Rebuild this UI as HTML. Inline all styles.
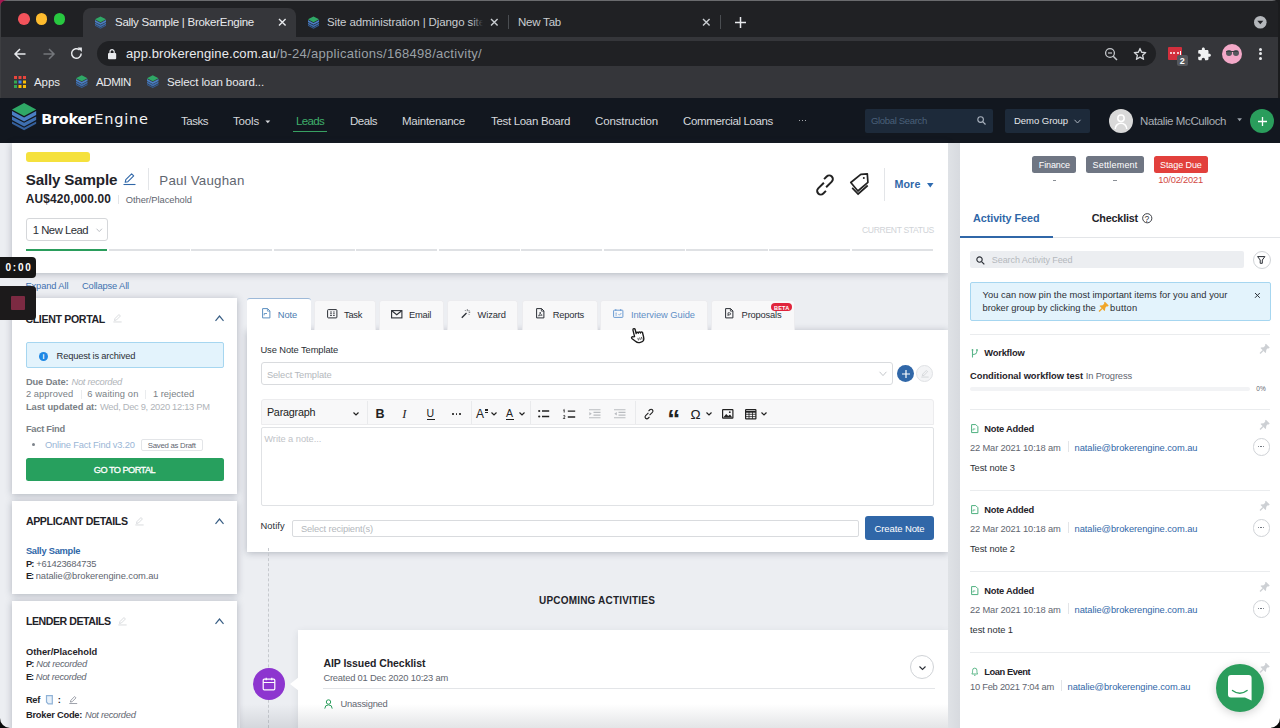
<!DOCTYPE html>
<html lang="en"><head><meta charset="utf-8"><title>Sally Sample | BrokerEngine</title>
<style>
html,body{margin:0;padding:0;}
body{width:1280px;height:728px;overflow:hidden;position:relative;background:#eceef2;font-family:"Liberation Sans",sans-serif;}
.t{position:absolute;white-space:nowrap;line-height:1;}
.r{position:absolute;box-sizing:border-box;}
svg{position:absolute;overflow:visible;}
</style></head><body>
<div class="r" style="left:0.00px;top:0.00px;width:1280.00px;height:37.00px;background:#202124;"></div>
<div class="r" style="left:0.00px;top:37.00px;width:1280.00px;height:61.00px;background:#35363a;"></div>
<div class="r" style="left:83.00px;top:8.00px;width:213.00px;height:29.00px;background:#35363a;border-radius:8px 8px 0 0;"></div>
<div class="r" style="left:18.40px;top:13.40px;width:11.60px;height:11.60px;background:#f3535b;border-radius:50%;"></div>
<div class="r" style="left:35.90px;top:13.40px;width:11.60px;height:11.60px;background:#febc2e;border-radius:50%;"></div>
<div class="r" style="left:53.60px;top:13.40px;width:11.60px;height:11.60px;background:#28c840;border-radius:50%;"></div>
<span class="t" style="left:115.00px;top:17.00px;font-size:11.50px;color:#e8eaed;letter-spacing:-0.266px;">Sally Sample | BrokerEngine</span>
<span class="t" style="left:327.00px;top:17.00px;font-size:11.50px;color:#c9cdd1;letter-spacing:-0.107px;">Site administration | Django site</span>
<div class="r" style="left:471.00px;top:12.00px;width:16.00px;height:20.00px;background:linear-gradient(90deg,rgba(32,33,36,0),#202124 75%);"></div>
<span class="t" style="left:518.00px;top:17.00px;font-size:11.50px;color:#c9cdd1;letter-spacing:-0.219px;">New Tab</span>
<div class="r" style="left:96.50px;top:41.20px;width:1059.00px;height:24.60px;background:#202124;border-radius:13px;"></div>
<span class="t" style="left:126.00px;top:47.00px;font-size:13.00px;color:#e8eaed;letter-spacing:0.112px;">app.brokerengine.com.au</span>
<span class="t" style="left:276.00px;top:47.00px;font-size:13.00px;color:#9aa0a6;letter-spacing:0.290px;">/b-24/applications/168498/activity/</span>
<span class="t" style="left:34.00px;top:77.00px;font-size:11.50px;color:#e8eaed;letter-spacing:-0.053px;">Apps</span>
<span class="t" style="left:96.00px;top:77.00px;font-size:11.50px;color:#e8eaed;letter-spacing:-0.411px;">ADMIN</span>
<span class="t" style="left:167.00px;top:77.00px;font-size:11.50px;color:#e8eaed;letter-spacing:-0.105px;">Select loan board...</span>
<div class="r" style="left:0.00px;top:98.00px;width:1280.00px;height:45.00px;background:#12171f;"></div>
<span class="t" style="left:41.25px;top:112.00px;font-size:14.50px;color:#ffffff;font-weight:700;letter-spacing:-0.301px;font-family:'DejaVu Sans',sans-serif;">Broker</span>
<span class="t" style="left:94.20px;top:112.00px;font-size:14.50px;color:#f2f3f5;letter-spacing:0.801px;font-family:'DejaVu Sans',sans-serif;">Engine</span>
<span class="t" style="left:181.00px;top:116.00px;font-size:11.50px;color:#d5d8dc;letter-spacing:-0.479px;">Tasks</span>
<span class="t" style="left:233.00px;top:116.00px;font-size:11.50px;color:#d5d8dc;letter-spacing:-0.169px;">Tools</span>
<span class="t" style="left:296.00px;top:116.00px;font-size:11.50px;color:#3fae6a;letter-spacing:-0.667px;">Leads</span>
<div class="r" style="left:292.80px;top:130.60px;width:34.40px;height:1.30px;background:#38a062;"></div>
<span class="t" style="left:350.00px;top:116.00px;font-size:11.50px;color:#d5d8dc;letter-spacing:-0.480px;">Deals</span>
<span class="t" style="left:402.00px;top:116.00px;font-size:11.50px;color:#d5d8dc;letter-spacing:-0.259px;">Maintenance</span>
<span class="t" style="left:491.00px;top:116.00px;font-size:11.50px;color:#d5d8dc;letter-spacing:-0.317px;">Test Loan Board</span>
<span class="t" style="left:595.00px;top:116.00px;font-size:11.50px;color:#d5d8dc;letter-spacing:-0.130px;">Construction</span>
<span class="t" style="left:683.00px;top:116.00px;font-size:11.50px;color:#d5d8dc;letter-spacing:-0.367px;">Commercial Loans</span>
<div class="r" style="left:798.50px;top:120.00px;width:1.40px;height:1.40px;background:#d5d8dc;border-radius:50%;"></div>
<div class="r" style="left:801.50px;top:120.00px;width:1.40px;height:1.40px;background:#d5d8dc;border-radius:50%;"></div>
<div class="r" style="left:804.50px;top:120.00px;width:1.40px;height:1.40px;background:#d5d8dc;border-radius:50%;"></div>
<div class="r" style="left:865.00px;top:108.60px;width:128.00px;height:24.00px;background:#1d2a3a;border-radius:2px;"></div>
<span class="t" style="left:871.00px;top:116.00px;font-size:9.50px;color:#4a6079;letter-spacing:-0.323px;">Global Search</span>
<div class="r" style="left:1005.00px;top:108.60px;width:85.00px;height:24.00px;background:#1d2a3a;border-radius:2px;"></div>
<span class="t" style="left:1014.00px;top:116.00px;font-size:9.50px;color:#e4e7ea;letter-spacing:-0.039px;">Demo Group</span>
<div class="r" style="left:1109.00px;top:109.00px;width:24.00px;height:24.00px;background:#d9d9d9;border-radius:50%;"></div>
<span class="t" style="left:1140.00px;top:116.00px;font-size:11.50px;color:#a9aeb5;letter-spacing:-0.393px;">Natalie McCulloch</span>
<div class="r" style="left:1250.00px;top:109.00px;width:24.00px;height:24.00px;background:#2a9d5c;border-radius:50%;"></div>
<div class="r" style="left:0.00px;top:143.00px;width:1280.00px;height:585.00px;background:#eceef2;"></div>
<div class="r" style="left:12.30px;top:143.00px;width:935.70px;height:129.50px;background:#ffffff;box-shadow:0 1px 7px rgba(40,50,70,.30);"></div>
<div class="r" style="left:25.80px;top:152.10px;width:63.80px;height:9.60px;background:#f5e13d;border-radius:3px;"></div>
<span class="t" style="left:25.80px;top:172.00px;font-size:15.20px;color:#1f2329;font-weight:700;letter-spacing:-0.190px;">Sally Sample</span>
<span class="t" style="left:159.30px;top:174.00px;font-size:13.30px;color:#5f6670;letter-spacing:0.226px;">Paul Vaughan</span>
<div class="r" style="left:147.60px;top:168.40px;width:1.00px;height:21.50px;background:#e3e5e8;"></div>
<span class="t" style="left:25.80px;top:194.00px;font-size:11.90px;color:#1f2329;font-weight:700;letter-spacing:0.141px;">AU$420,000.00</span>
<div class="r" style="left:118.30px;top:194.50px;width:1.00px;height:9.00px;background:#e3e5e8;"></div>
<span class="t" style="left:125.80px;top:196.00px;font-size:9.33px;color:#5f6670;letter-spacing:-0.060px;">Other/Placehold</span>
<div class="r" style="left:26.20px;top:218.00px;width:82.30px;height:23.20px;background:#ffffff;border:1px solid #d5d7da;border-radius:3px;"></div>
<span class="t" style="left:32.70px;top:225.00px;font-size:11.30px;color:#2b2f36;letter-spacing:-0.481px;">1 New Lead</span>
<div class="r" style="left:26.00px;top:249.00px;width:81.20px;height:1.70px;background:#2a9d5c;"></div>
<div class="r" style="left:108.55px;top:249.00px;width:81.20px;height:1.70px;background:#dfe1e4;"></div>
<div class="r" style="left:191.10px;top:249.00px;width:81.20px;height:1.70px;background:#dfe1e4;"></div>
<div class="r" style="left:273.65px;top:249.00px;width:81.20px;height:1.70px;background:#dfe1e4;"></div>
<div class="r" style="left:356.20px;top:249.00px;width:81.20px;height:1.70px;background:#dfe1e4;"></div>
<div class="r" style="left:438.75px;top:249.00px;width:81.20px;height:1.70px;background:#dfe1e4;"></div>
<div class="r" style="left:521.30px;top:249.00px;width:81.20px;height:1.70px;background:#dfe1e4;"></div>
<div class="r" style="left:603.85px;top:249.00px;width:81.20px;height:1.70px;background:#dfe1e4;"></div>
<div class="r" style="left:686.40px;top:249.00px;width:81.20px;height:1.70px;background:#dfe1e4;"></div>
<div class="r" style="left:768.95px;top:249.00px;width:81.20px;height:1.70px;background:#dfe1e4;"></div>
<div class="r" style="left:851.50px;top:249.00px;width:81.20px;height:1.70px;background:#dfe1e4;"></div>
<span class="t" style="left:862.00px;top:226.00px;font-size:8.60px;color:#d0d3d7;letter-spacing:-0.352px;">CURRENT STATUS</span>
<span class="t" style="left:894.40px;top:179.00px;font-size:10.70px;color:#3067a8;font-weight:700;letter-spacing:0.134px;">More</span>
<div class="r" style="left:883.50px;top:168.00px;width:1.00px;height:32.50px;background:#e3e5e8;"></div>
<span class="t" style="left:25.40px;top:282.00px;font-size:9.33px;color:#3f72b0;letter-spacing:-0.109px;">Expand All</span>
<span class="t" style="left:82.00px;top:282.00px;font-size:9.33px;color:#3f72b0;letter-spacing:-0.146px;">Collapse All</span>
<div class="r" style="left:12.30px;top:298.40px;width:224.50px;height:195.40px;background:#ffffff;box-shadow:0 1px 7px rgba(40,50,70,.30);"></div>
<span class="t" style="left:25.40px;top:314.00px;font-size:10.60px;color:#1f2329;font-weight:700;letter-spacing:-0.339px;">CLIENT PORTAL</span>
<div class="r" style="left:26.40px;top:342.20px;width:197.20px;height:26.00px;background:#e3f3fc;border:1px solid #a6d6f0;border-radius:2px;"></div>
<div class="r" style="left:39.00px;top:351.50px;width:9.00px;height:9.00px;background:#1e88e5;border-radius:50%;"></div>
<span class="t" style="left:56.60px;top:352.00px;font-size:9.33px;color:#2b2f36;letter-spacing:-0.176px;">Request is archived</span>
<span class="t" style="left:25.90px;top:378.00px;font-size:9.33px;color:#7a7f86;font-weight:700;letter-spacing:-0.105px;">Due Date:</span>
<span class="t" style="left:71.50px;top:378.00px;font-size:9.33px;color:#b0b4b9;font-style:italic;letter-spacing:-0.286px;">Not recorded</span>
<span class="t" style="left:25.90px;top:390.00px;font-size:9.33px;color:#7a7f86;letter-spacing:0.061px;">2 approved</span>
<div class="r" style="left:80.70px;top:390.00px;width:1.00px;height:9.00px;background:#eaecee;"></div>
<span class="t" style="left:87.25px;top:390.00px;font-size:9.33px;color:#7a7f86;letter-spacing:0.117px;">6 waiting on</span>
<div class="r" style="left:145.40px;top:390.00px;width:1.00px;height:9.00px;background:#eaecee;"></div>
<span class="t" style="left:152.90px;top:390.00px;font-size:9.33px;color:#7a7f86;letter-spacing:0.023px;">1 rejected</span>
<span class="t" style="left:25.90px;top:403.00px;font-size:9.33px;color:#7a7f86;font-weight:700;letter-spacing:-0.047px;">Last updated at:</span>
<span class="t" style="left:100.00px;top:403.00px;font-size:9.33px;color:#b0b4b9;letter-spacing:-0.294px;">Wed, Dec 9, 2020 12:13 PM</span>
<span class="t" style="left:25.90px;top:425.00px;font-size:9.33px;color:#7a7f86;font-weight:700;letter-spacing:-0.263px;">Fact Find</span>
<span class="t" style="left:45.00px;top:441.00px;font-size:9.33px;color:#9ab6d6;letter-spacing:-0.189px;">Online Fact Find v3.20</span>
<div class="r" style="left:141.20px;top:439.40px;width:61.40px;height:11.80px;background:#ffffff;border:1px solid #e3e5e8;border-radius:2px;"></div>
<span class="t" style="left:147.80px;top:442.00px;font-size:7.80px;color:#5f6670;letter-spacing:-0.271px;">Saved as Draft</span>
<div class="r" style="left:32.30px;top:443.40px;width:3.00px;height:3.00px;background:#7d838b;border-radius:50%;"></div>
<div class="r" style="left:25.90px;top:457.60px;width:198.20px;height:23.40px;background:#27a05e;border-radius:2.5px;"></div>
<span class="t" style="left:93.80px;top:466.00px;font-size:9.20px;color:#ffffff;letter-spacing:-0.527px;-webkit-text-stroke:0.3px #ffffff;">GO TO PORTAL</span>
<div class="r" style="left:12.30px;top:501.20px;width:224.50px;height:92.60px;background:#ffffff;box-shadow:0 1px 7px rgba(40,50,70,.30);"></div>
<span class="t" style="left:25.90px;top:516.00px;font-size:10.60px;color:#1f2329;font-weight:700;letter-spacing:-0.374px;">APPLICANT DETAILS</span>
<span class="t" style="left:25.90px;top:547.00px;font-size:9.33px;color:#3067a8;font-weight:700;letter-spacing:-0.264px;">Sally Sample</span>
<span class="t" style="left:25.90px;top:560.00px;font-size:9.33px;color:#1f2329;font-weight:700;letter-spacing:-0.915px;">P:</span>
<span class="t" style="left:36.25px;top:560.00px;font-size:9.33px;color:#5f6670;letter-spacing:-0.211px;">+61423684735</span>
<span class="t" style="left:25.90px;top:572.00px;font-size:9.33px;color:#1f2329;font-weight:700;letter-spacing:-1.165px;">E:</span>
<span class="t" style="left:35.70px;top:572.00px;font-size:9.33px;color:#5f6670;letter-spacing:-0.067px;">natalie@brokerengine.com.au</span>
<div class="r" style="left:12.30px;top:601.20px;width:224.50px;height:130.00px;background:#ffffff;box-shadow:0 1px 7px rgba(40,50,70,.30);"></div>
<span class="t" style="left:25.90px;top:616.00px;font-size:10.60px;color:#1f2329;font-weight:700;letter-spacing:-0.449px;">LENDER DETAILS</span>
<span class="t" style="left:25.90px;top:648.00px;font-size:9.33px;color:#1f2329;font-weight:700;letter-spacing:-0.017px;">Other/Placehold</span>
<span class="t" style="left:25.90px;top:660.00px;font-size:9.33px;color:#1f2329;font-weight:700;letter-spacing:-0.915px;">P:</span>
<span class="t" style="left:36.25px;top:660.00px;font-size:9.33px;color:#5f6670;font-style:italic;letter-spacing:-0.278px;">Not recorded</span>
<span class="t" style="left:25.90px;top:673.00px;font-size:9.33px;color:#1f2329;font-weight:700;letter-spacing:-1.165px;">E:</span>
<span class="t" style="left:35.70px;top:673.00px;font-size:9.33px;color:#5f6670;font-style:italic;letter-spacing:-0.278px;">Not recorded</span>
<span class="t" style="left:25.90px;top:696.00px;font-size:9.33px;color:#1f2329;font-weight:700;letter-spacing:-0.311px;">Ref</span>
<span class="t" style="left:57.80px;top:696.00px;font-size:9.33px;color:#1f2329;font-weight:700;">:</span>
<span class="t" style="left:25.90px;top:711.00px;font-size:9.33px;color:#1f2329;font-weight:700;letter-spacing:-0.233px;">Broker Code:</span>
<span class="t" style="left:85.00px;top:711.00px;font-size:9.33px;color:#5f6670;font-style:italic;letter-spacing:-0.278px;">Not recorded</span>
<div class="r" style="left:247.00px;top:329.60px;width:701.00px;height:222.60px;background:#ffffff;box-shadow:0 1px 7px rgba(40,50,70,.30);"></div>
<div class="r" style="left:247.20px;top:298.40px;width:63.40px;height:32.50px;background:#ffffff;border-top:1.5px solid #9db9d8;border-radius:3px 3px 0 0;"></div>
<span class="t" style="left:277.80px;top:311.00px;font-size:9.33px;color:#4a7bb0;letter-spacing:-0.127px;">Note</span>
<div class="r" style="left:313.90px;top:299.80px;width:61.70px;height:29.80px;background:#f8f8f9;border:1px solid #ececef;border-bottom:none;border-radius:3px 3px 0 0;"></div>
<span class="t" style="left:344.10px;top:311.00px;font-size:9.33px;color:#2b2f36;letter-spacing:-0.321px;">Task</span>
<div class="r" style="left:378.90px;top:299.80px;width:64.70px;height:29.80px;background:#f8f8f9;border:1px solid #ececef;border-bottom:none;border-radius:3px 3px 0 0;"></div>
<span class="t" style="left:409.00px;top:311.00px;font-size:9.33px;color:#2b2f36;letter-spacing:-0.266px;">Email</span>
<div class="r" style="left:446.70px;top:299.80px;width:71.80px;height:29.80px;background:#f8f8f9;border:1px solid #ececef;border-bottom:none;border-radius:3px 3px 0 0;"></div>
<span class="t" style="left:477.50px;top:311.00px;font-size:9.33px;color:#2b2f36;letter-spacing:-0.122px;">Wizard</span>
<div class="r" style="left:521.75px;top:299.80px;width:76.00px;height:29.80px;background:#f8f8f9;border:1px solid #ececef;border-bottom:none;border-radius:3px 3px 0 0;"></div>
<span class="t" style="left:552.80px;top:311.00px;font-size:9.33px;color:#2b2f36;letter-spacing:-0.196px;">Reports</span>
<div class="r" style="left:599.90px;top:299.80px;width:107.80px;height:29.80px;background:#f8f8f9;border:1px solid #ececef;border-bottom:none;border-radius:3px 3px 0 0;"></div>
<span class="t" style="left:630.90px;top:311.00px;font-size:9.33px;color:#5f8fc6;letter-spacing:-0.048px;">Interview Guide</span>
<div class="r" style="left:711.00px;top:299.80px;width:83.60px;height:29.80px;background:#f8f8f9;border:1px solid #ececef;border-bottom:none;border-radius:3px 3px 0 0;"></div>
<span class="t" style="left:741.60px;top:311.00px;font-size:9.33px;color:#2b2f36;letter-spacing:-0.188px;">Proposals</span>
<div class="r" style="left:771.10px;top:303.30px;width:21.30px;height:8.10px;background:#e0243c;border-radius:4px;"></div>
<span class="t" style="left:774.00px;top:306.00px;font-size:5.60px;color:#ffffff;font-weight:700;letter-spacing:0.168px;">BETA</span>
<span class="t" style="left:260.40px;top:346.00px;font-size:9.33px;color:#2b2f36;letter-spacing:-0.081px;">Use Note Template</span>
<div class="r" style="left:260.60px;top:362.20px;width:632.00px;height:23.00px;background:#ffffff;border:1px solid #d9dbde;border-radius:3px;"></div>
<span class="t" style="left:266.90px;top:371.00px;font-size:9.33px;color:#b4b8bd;letter-spacing:-0.101px;">Select Template</span>
<div class="r" style="left:897.00px;top:365.00px;width:17.00px;height:17.00px;background:#3067a8;border-radius:50%;"></div>
<div class="r" style="left:916.00px;top:365.00px;width:17.00px;height:17.00px;background:#f3f4f6;border:1px solid #e0e2e5;border-radius:50%;"></div>
<div class="r" style="left:260.90px;top:399.30px;width:673.00px;height:25.80px;background:#f8f8f9;border:1px solid #ececee;border-radius:3px 3px 0 0;"></div>
<div class="r" style="left:260.90px;top:426.90px;width:673.00px;height:78.90px;background:#ffffff;border:1px solid #e0e2e5;border-radius:2px;"></div>
<span class="t" style="left:266.90px;top:407.00px;font-size:10.80px;color:#222222;letter-spacing:-0.226px;">Paragraph</span>
<span class="t" style="left:264.30px;top:435.00px;font-size:9.33px;color:#bfc3c8;letter-spacing:-0.060px;">Write a note...</span>
<span class="t" style="left:260.40px;top:522.00px;font-size:9.33px;color:#2b2f36;letter-spacing:0.075px;">Notify</span>
<div class="r" style="left:292.20px;top:520.30px;width:567.00px;height:16.40px;background:#ffffff;border:1px solid #d9dbde;border-radius:2px;"></div>
<span class="t" style="left:300.90px;top:525.00px;font-size:9.33px;color:#b4b8bd;letter-spacing:-0.141px;">Select recipient(s)</span>
<div class="r" style="left:865.00px;top:516.40px;width:68.60px;height:23.80px;background:#3067a8;border-radius:3px;"></div>
<span class="t" style="left:874.50px;top:524.00px;font-size:9.50px;color:#ffffff;letter-spacing:-0.111px;">Create Note</span>
<div class="r" style="left:268px;top:548px;width:0;height:180px;border-left:1px dashed #c6c9ce;"></div>
<span class="t" style="left:539.00px;top:596.00px;font-size:10.00px;color:#1f2329;font-weight:700;letter-spacing:0.189px;">UPCOMING ACTIVITIES</span>
<div class="r" style="left:298.00px;top:630.25px;width:650.00px;height:100.00px;background:#ffffff;box-shadow:0 2px 7px rgba(60,70,90,.12);"></div>
<span class="t" style="left:323.40px;top:658.00px;font-size:10.50px;color:#1f2329;font-weight:700;letter-spacing:-0.055px;">AIP Issued Checklist</span>
<span class="t" style="left:323.40px;top:674.00px;font-size:9.33px;color:#5f6670;letter-spacing:-0.200px;">Created 01 Dec 2020 10:23 am</span>
<div class="r" style="left:323.00px;top:688.20px;width:612.00px;height:1.00px;background:#e3e5e8;"></div>
<span class="t" style="left:340.60px;top:700.00px;font-size:9.33px;color:#5f6670;letter-spacing:-0.238px;">Unassigned</span>
<div class="r" style="left:252.90px;top:667.80px;width:32.40px;height:32.40px;background:#8d35cf;border-radius:50%;"></div>
<div class="r" style="left:910.00px;top:655.00px;width:24.00px;height:24.00px;background:#ffffff;border:1px solid #d0d3d7;border-radius:50%;"></div>
<div class="r" style="left:240.00px;top:704.00px;width:716.00px;height:24.00px;background:linear-gradient(rgba(130,135,145,0),rgba(130,135,145,.22));"></div>
<div class="r" style="left:948.00px;top:143.00px;width:12.00px;height:585.00px;background:linear-gradient(90deg,#dfe2e6,#d7dadf);"></div>
<div class="r" style="left:960.00px;top:143.00px;width:320.00px;height:585.00px;background:#ffffff;"></div>
<div class="r" style="left:1032.00px;top:155.75px;width:44.25px;height:17.25px;background:#6f7683;border-radius:2.5px;"></div>
<span class="t" style="left:1038.75px;top:161.00px;font-size:9.00px;color:#ffffff;letter-spacing:-0.110px;">Finance</span>
<div class="r" style="left:1086.25px;top:155.75px;width:58.00px;height:17.25px;background:#6f7683;border-radius:2.5px;"></div>
<span class="t" style="left:1092.50px;top:161.00px;font-size:9.00px;color:#ffffff;letter-spacing:0.198px;">Settlement</span>
<div class="r" style="left:1153.75px;top:155.75px;width:54.25px;height:17.25px;background:#e2403c;border-radius:2.5px;"></div>
<span class="t" style="left:1160.00px;top:161.00px;font-size:9.00px;color:#ffffff;letter-spacing:-0.087px;">Stage Due</span>
<div class="r" style="left:1052.50px;top:180.30px;width:3.50px;height:1.00px;background:#8a8f96;"></div>
<div class="r" style="left:1113.00px;top:180.30px;width:3.50px;height:1.00px;background:#8a8f96;"></div>
<span class="t" style="left:1158.25px;top:176.00px;font-size:9.33px;color:#d24a45;letter-spacing:-0.195px;">10/02/2021</span>
<span class="t" style="left:973.00px;top:213.00px;font-size:10.80px;color:#3067a8;font-weight:700;letter-spacing:-0.056px;">Activity Feed</span>
<span class="t" style="left:1091.75px;top:213.00px;font-size:10.80px;color:#1f2329;font-weight:700;letter-spacing:-0.197px;">Checklist</span>
<div class="r" style="left:960.00px;top:237.00px;width:320.00px;height:1.00px;background:#e3e5e8;"></div>
<div class="r" style="left:960.00px;top:236.25px;width:92.50px;height:2.00px;background:#3067a8;"></div>
<div class="r" style="left:970.00px;top:250.75px;width:273.75px;height:17.25px;background:#eceef1;border-radius:2px;"></div>
<span class="t" style="left:991.75px;top:256.00px;font-size:9.00px;color:#b4b8bd;letter-spacing:-0.064px;">Search Activity Feed</span>
<div class="r" style="left:1252.50px;top:250.50px;width:18.00px;height:18.00px;background:#ffffff;border:1px solid #d0d3d7;border-radius:50%;"></div>
<div class="r" style="left:970.00px;top:281.75px;width:300.50px;height:38.75px;background:#e3f3fc;border:1px solid #a6d6f0;border-radius:2px;"></div>
<span class="t" style="left:982.50px;top:291.00px;font-size:9.33px;color:#2b2f36;letter-spacing:0.037px;">You can now pin the most important items for you and your</span>
<span class="t" style="left:982.50px;top:304.00px;font-size:9.33px;color:#2b2f36;letter-spacing:-0.030px;">broker group by clicking the</span>
<span class="t" style="left:1110.00px;top:304.00px;font-size:9.33px;color:#2b2f36;letter-spacing:0.260px;">button</span>
<div class="r" style="left:970.00px;top:333.50px;width:300.00px;height:1.00px;background:#eaecee;"></div>
<span class="t" style="left:984.25px;top:349.00px;font-size:9.33px;color:#1f2329;font-weight:700;letter-spacing:-0.195px;">Workflow</span>
<span class="t" style="left:970.00px;top:372.00px;font-size:9.33px;color:#1f2329;font-weight:700;letter-spacing:-0.021px;">Conditional workflow test</span>
<span class="t" style="left:1085.75px;top:372.00px;font-size:9.33px;color:#5f6670;letter-spacing:-0.133px;">In Progress</span>
<div class="r" style="left:970.00px;top:387.00px;width:280.00px;height:3.50px;background:#f2f3f5;border-radius:2px;"></div>
<span class="t" style="left:1256.25px;top:386.00px;font-size:6.50px;color:#5f6670;letter-spacing:0.053px;">0%</span>
<div class="r" style="left:970.00px;top:409.20px;width:300.00px;height:1.00px;background:#eaecee;"></div>
<span class="t" style="left:984.25px;top:425.00px;font-size:9.33px;color:#1f2329;font-weight:700;letter-spacing:-0.225px;">Note Added</span>
<span class="t" style="left:970.00px;top:444.00px;font-size:9.33px;color:#5f6670;letter-spacing:-0.157px;">22 Mar 2021 10:18 am</span>
<div class="r" style="left:1067.50px;top:441.00px;width:1.00px;height:11.00px;background:#e3e5e8;"></div>
<span class="t" style="left:1074.50px;top:444.00px;font-size:9.33px;color:#3067a8;letter-spacing:-0.060px;">natalie@brokerengine.com.au</span>
<span class="t" style="left:970.00px;top:464.00px;font-size:9.33px;color:#2b2f36;letter-spacing:-0.058px;">Test note 3</span>
<div class="r" style="left:1252.50px;top:438.00px;width:17.50px;height:17.50px;background:#ffffff;border:1px solid #d0d3d7;border-radius:50%;"></div>
<div class="r" style="left:1257.70px;top:446.20px;width:1.30px;height:1.30px;background:#5f6670;border-radius:50%;"></div>
<div class="r" style="left:1260.40px;top:446.20px;width:1.30px;height:1.30px;background:#5f6670;border-radius:50%;"></div>
<div class="r" style="left:1263.10px;top:446.20px;width:1.30px;height:1.30px;background:#5f6670;border-radius:50%;"></div>
<div class="r" style="left:970.00px;top:490.30px;width:300.00px;height:1.00px;background:#eaecee;"></div>
<span class="t" style="left:984.25px;top:506.00px;font-size:9.33px;color:#1f2329;font-weight:700;letter-spacing:-0.225px;">Note Added</span>
<span class="t" style="left:970.00px;top:525.00px;font-size:9.33px;color:#5f6670;letter-spacing:-0.157px;">22 Mar 2021 10:18 am</span>
<div class="r" style="left:1067.50px;top:522.00px;width:1.00px;height:11.00px;background:#e3e5e8;"></div>
<span class="t" style="left:1074.50px;top:525.00px;font-size:9.33px;color:#3067a8;letter-spacing:-0.060px;">natalie@brokerengine.com.au</span>
<span class="t" style="left:970.00px;top:545.00px;font-size:9.33px;color:#2b2f36;letter-spacing:-0.058px;">Test note 2</span>
<div class="r" style="left:1252.50px;top:519.00px;width:17.50px;height:17.50px;background:#ffffff;border:1px solid #d0d3d7;border-radius:50%;"></div>
<div class="r" style="left:1257.70px;top:527.20px;width:1.30px;height:1.30px;background:#5f6670;border-radius:50%;"></div>
<div class="r" style="left:1260.40px;top:527.20px;width:1.30px;height:1.30px;background:#5f6670;border-radius:50%;"></div>
<div class="r" style="left:1263.10px;top:527.20px;width:1.30px;height:1.30px;background:#5f6670;border-radius:50%;"></div>
<div class="r" style="left:970.00px;top:571.30px;width:300.00px;height:1.00px;background:#eaecee;"></div>
<span class="t" style="left:984.25px;top:587.00px;font-size:9.33px;color:#1f2329;font-weight:700;letter-spacing:-0.225px;">Note Added</span>
<span class="t" style="left:970.00px;top:606.00px;font-size:9.33px;color:#5f6670;letter-spacing:-0.157px;">22 Mar 2021 10:18 am</span>
<div class="r" style="left:1067.50px;top:603.00px;width:1.00px;height:11.00px;background:#e3e5e8;"></div>
<span class="t" style="left:1074.50px;top:606.00px;font-size:9.33px;color:#3067a8;letter-spacing:-0.060px;">natalie@brokerengine.com.au</span>
<span class="t" style="left:970.00px;top:626.00px;font-size:9.33px;color:#2b2f36;letter-spacing:-0.052px;">test note 1</span>
<div class="r" style="left:1252.50px;top:600.00px;width:17.50px;height:17.50px;background:#ffffff;border:1px solid #d0d3d7;border-radius:50%;"></div>
<div class="r" style="left:1257.70px;top:608.20px;width:1.30px;height:1.30px;background:#5f6670;border-radius:50%;"></div>
<div class="r" style="left:1260.40px;top:608.20px;width:1.30px;height:1.30px;background:#5f6670;border-radius:50%;"></div>
<div class="r" style="left:1263.10px;top:608.20px;width:1.30px;height:1.30px;background:#5f6670;border-radius:50%;"></div>
<div class="r" style="left:970.00px;top:652.30px;width:300.00px;height:1.00px;background:#eaecee;"></div>
<span class="t" style="left:984.25px;top:668.00px;font-size:9.33px;color:#1f2329;font-weight:700;letter-spacing:-0.429px;">Loan Event</span>
<span class="t" style="left:970.00px;top:683.00px;font-size:9.33px;color:#5f6670;letter-spacing:-0.247px;">10 Feb 2021 7:04 am</span>
<div class="r" style="left:1061.00px;top:680.00px;width:1.00px;height:11.00px;background:#e3e5e8;"></div>
<span class="t" style="left:1067.50px;top:683.00px;font-size:9.33px;color:#3067a8;letter-spacing:-0.060px;">natalie@brokerengine.com.au</span>
<div class="r" style="left:1216.00px;top:663.50px;width:48.00px;height:48.00px;background:#2a9d5c;border-radius:50%;box-shadow:0 2px 10px rgba(0,0,0,.18);"></div>
<div class="r" style="left:0.00px;top:256.80px;width:35.50px;height:21.20px;background:#161616;border-radius:0 4px 4px 0;"></div>
<span class="t" style="left:5.50px;top:263.00px;font-size:10.00px;color:#ffffff;font-weight:700;letter-spacing:1.746px;">0:00</span>
<div class="r" style="left:0.00px;top:285.70px;width:35.50px;height:34.50px;background:#1c1a1b;border-radius:0 4px 4px 0;"></div>
<div class="r" style="left:10.70px;top:295.90px;width:14.30px;height:14.30px;background:#7c2a42;border-radius:1px;"></div>
<svg style="left:12.10px;top:103.20px;" width="24.20" height="27.20" viewBox="0 0 24 27"><path d="M12 0 L24 6.4 L12 12.8 L0 6.4 Z" fill="#2fa866"/><path d="M0 8 L12 14.4 L24 8 L24 12 L12 18.4 L0 12 Z" fill="#4a7fc4"/><path d="M0 13.3 L12 19.7 L24 13.3 L24 17 L12 23.4 L0 17 Z" fill="#3e6fb0"/><path d="M0 18.3 L12 24.7 L24 18.3 L24 20.6 L12 27 L0 20.6 Z" fill="#35609c"/></svg>
<svg style="left:95.30px;top:16.00px;" width="11.00" height="13.20" viewBox="0 0 24 27"><path d="M12 0 L24 6.4 L12 12.8 L0 6.4 Z" fill="#2fa866"/><path d="M0 8 L12 14.4 L24 8 L24 12 L12 18.4 L0 12 Z" fill="#4a7fc4"/><path d="M0 13.3 L12 19.7 L24 13.3 L24 17 L12 23.4 L0 17 Z" fill="#3e6fb0"/><path d="M0 18.3 L12 24.7 L24 18.3 L24 20.6 L12 27 L0 20.6 Z" fill="#35609c"/></svg>
<svg style="left:307.50px;top:16.00px;" width="11.00" height="13.20" viewBox="0 0 24 27"><path d="M12 0 L24 6.4 L12 12.8 L0 6.4 Z" fill="#2fa866"/><path d="M0 8 L12 14.4 L24 8 L24 12 L12 18.4 L0 12 Z" fill="#4a7fc4"/><path d="M0 13.3 L12 19.7 L24 13.3 L24 17 L12 23.4 L0 17 Z" fill="#3e6fb0"/><path d="M0 18.3 L12 24.7 L24 18.3 L24 20.6 L12 27 L0 20.6 Z" fill="#35609c"/></svg>
<svg style="left:76.00px;top:75.00px;" width="11.50" height="13.30" viewBox="0 0 24 27"><path d="M12 0 L24 6.4 L12 12.8 L0 6.4 Z" fill="#2fa866"/><path d="M0 8 L12 14.4 L24 8 L24 12 L12 18.4 L0 12 Z" fill="#4a7fc4"/><path d="M0 13.3 L12 19.7 L24 13.3 L24 17 L12 23.4 L0 17 Z" fill="#3e6fb0"/><path d="M0 18.3 L12 24.7 L24 18.3 L24 20.6 L12 27 L0 20.6 Z" fill="#35609c"/></svg>
<svg style="left:146.90px;top:75.00px;" width="11.50" height="13.30" viewBox="0 0 24 27"><path d="M12 0 L24 6.4 L12 12.8 L0 6.4 Z" fill="#2fa866"/><path d="M0 8 L12 14.4 L24 8 L24 12 L12 18.4 L0 12 Z" fill="#4a7fc4"/><path d="M0 13.3 L12 19.7 L24 13.3 L24 17 L12 23.4 L0 17 Z" fill="#3e6fb0"/><path d="M0 18.3 L12 24.7 L24 18.3 L24 20.6 L12 27 L0 20.6 Z" fill="#35609c"/></svg>
<svg style="left:13.80px;top:75.60px;" width="12.00" height="12.00" viewBox="0 0 12 12"><rect x="0.0" y="0.0" width="3" height="3" fill="#e8453c"/><rect x="4.5" y="0.0" width="3" height="3" fill="#e8453c"/><rect x="9.0" y="0.0" width="3" height="3" fill="#e8453c"/><rect x="0.0" y="4.5" width="3" height="3" fill="#34a853"/><rect x="4.5" y="4.5" width="3" height="3" fill="#4285f4"/><rect x="9.0" y="4.5" width="3" height="3" fill="#fbbc05"/><rect x="0.0" y="9.0" width="3" height="3" fill="#34a853"/><rect x="4.5" y="9.0" width="3" height="3" fill="#fbbc05"/><rect x="9.0" y="9.0" width="3" height="3" fill="#fbbc05"/></svg>
<svg style="left:278.70px;top:19.20px;" width="6.60" height="6.60" viewBox="0 0 6.6 6.6"><path d="M0 0 L6.6 6.6 M6.6 0 L0 6.6" stroke="#e8eaed" stroke-width="1.4" fill="none"/></svg>
<svg style="left:490.70px;top:19.20px;" width="6.60" height="6.60" viewBox="0 0 6.6 6.6"><path d="M0 0 L6.6 6.6 M6.6 0 L0 6.6" stroke="#c9cdd1" stroke-width="1.4" fill="none"/></svg>
<svg style="left:703.20px;top:19.20px;" width="6.60" height="6.60" viewBox="0 0 6.6 6.6"><path d="M0 0 L6.6 6.6 M6.6 0 L0 6.6" stroke="#c9cdd1" stroke-width="1.4" fill="none"/></svg>
<div class="r" style="left:508.00px;top:15.00px;width:1.00px;height:14.00px;background:#4a4d51;"></div>
<div class="r" style="left:720.00px;top:15.00px;width:1.00px;height:14.00px;background:#4a4d51;"></div>
<svg style="left:735.00px;top:17.00px;" width="11.00" height="11.00" viewBox="0 0 11 11"><path d="M5.5 0 V11 M0 5.5 H11" stroke="#e8eaed" stroke-width="1.5" fill="none"/></svg>
<svg style="left:1254.00px;top:16.30px;" width="12.60" height="12.60" viewBox="0 0 12.6 12.6"><circle cx="6.3" cy="6.3" r="6.3" fill="#b4b7bb"/><path d="M3.3 4.8 H9.3 L6.3 8.3 Z" fill="#202124"/></svg>
<svg style="left:14.00px;top:47.50px;" width="12.00" height="12.00" viewBox="0 0 12 12"><path d="M11.5 6 H1.5 M6 1 L1 6 L6 11" stroke="#e8eaed" stroke-width="1.5" fill="none"/></svg>
<svg style="left:42.50px;top:47.50px;" width="12.00" height="12.00" viewBox="0 0 12 12"><path d="M0.5 6 H10.5 M6 1 L11 6 L6 11" stroke="#74777b" stroke-width="1.5" fill="none"/></svg>
<svg style="left:70.00px;top:47.00px;" width="13.00" height="13.00" viewBox="0 0 13 13"><path d="M11.2 6.5 A4.8 4.8 0 1 1 9.6 2.9" stroke="#e8eaed" stroke-width="1.5" fill="none"/><path d="M7.6 0.6 H11.9 V4.9 Z" fill="#e8eaed"/></svg>
<svg style="left:108.30px;top:48.60px;" width="8.20" height="10.20" viewBox="0 0 8.2 10.2"><rect x="0" y="4" width="8.2" height="6.2" rx="1" fill="#e8eaed"/><path d="M2 4.5 V2.8 a2.1 2.1 0 0 1 4.2 0 V4.5" stroke="#e8eaed" stroke-width="1.2" fill="none"/></svg>
<svg style="left:1103.50px;top:46.50px;" width="14.00" height="14.00" viewBox="0 0 14 14"><circle cx="6" cy="6" r="4.4" stroke="#c4c7cb" stroke-width="1.3" fill="none"/><path d="M9.2 9.2 L13 13" stroke="#c4c7cb" stroke-width="1.5"/><path d="M4 6 H8" stroke="#c4c7cb" stroke-width="1.2"/></svg>
<svg style="left:1132.50px;top:46.60px;" width="14.00" height="14.00" viewBox="0 0 24 24"><path d="M12 2.5 L14.8 9 L21.8 9.6 L16.5 14.2 L18.1 21.1 L12 17.4 L5.9 21.1 L7.5 14.2 L2.2 9.6 L9.2 9 Z" stroke="#d5d8dc" stroke-width="2.2" fill="none" stroke-linejoin="round"/></svg>
<div class="r" style="left:1168.00px;top:46.60px;width:14.30px;height:13.60px;background:#d32f3d;border-radius:1px;"></div>
<div class="r" style="left:1170.20px;top:52.30px;width:2.00px;height:2.00px;background:#ffffff;border-radius:50%;"></div>
<div class="r" style="left:1173.40px;top:52.30px;width:2.00px;height:2.00px;background:#ffffff;border-radius:50%;"></div>
<div class="r" style="left:1176.60px;top:52.30px;width:2.00px;height:2.00px;background:#ffffff;border-radius:50%;"></div>
<div class="r" style="left:1179.70px;top:50.50px;width:1.00px;height:4.00px;background:#ffffff;"></div>
<div class="r" style="left:1177.00px;top:55.00px;width:10.60px;height:10.60px;background:#55585d;border-radius:2px;"></div>
<span class="t" style="left:1179.70px;top:57.00px;font-size:9.00px;color:#ffffff;font-weight:700;">2</span>
<svg style="left:1196.50px;top:46.80px;" width="14.50" height="14.50" viewBox="0 0 24 24"><path d="M20.5 11H19V7c0-1.1-.9-2-2-2h-4V3.5C13 2.12 11.88 1 10.500 1S8 2.12 8 3.5V5H4c-1.1 0-1.99.9-1.99 2v3.800H3.500c1.490 0 2.700 1.210 2.700 2.700s-1.210 2.700-2.700 2.700H2V20c0 1.100.900 2 2 2h3.800v-1.500c0-1.490 1.210-2.700 2.700-2.700 1.490 0 2.700 1.210 2.700 2.700V22H17c1.100 0 2-.900 2-2v-4h1.500c1.380 0 2.500-1.120 2.500-2.500S21.880 11 20.500 11z" fill="#f1f3f4"/></svg>
<div class="r" style="left:1222.00px;top:43.60px;width:20.00px;height:20.00px;background:#f3a9c8;border-radius:50%;"></div>
<div class="r" style="left:1225.50px;top:50.00px;width:6.00px;height:6.00px;background:#55585d;border-radius:50%;"></div>
<div class="r" style="left:1232.50px;top:50.00px;width:6.00px;height:6.00px;background:#55585d;border-radius:50%;"></div>
<div class="r" style="left:1226.00px;top:50.50px;width:12.00px;height:1.20px;background:#3c3f43;"></div>
<div class="r" style="left:1259.00px;top:47.70px;width:3.00px;height:3.00px;background:#e8eaed;border-radius:50%;"></div>
<div class="r" style="left:1259.00px;top:52.10px;width:3.00px;height:3.00px;background:#e8eaed;border-radius:50%;"></div>
<div class="r" style="left:1259.00px;top:56.50px;width:3.00px;height:3.00px;background:#e8eaed;border-radius:50%;"></div>
<svg style="left:265.00px;top:119.50px;" width="5.60" height="3.60" viewBox="0 0 8 5"><path d="M0.5 0.5 H7.5 L4 4.5 Z" fill="#d5d8dc"/></svg>
<svg style="left:977.00px;top:116.00px;" width="9.00" height="9.00" viewBox="0 0 9 9"><circle cx="3.6" cy="3.6" r="2.8" stroke="#aab3bf" stroke-width="1.1" fill="none"/><path d="M5.7 5.7 L8.5 8.5" stroke="#aab3bf" stroke-width="1.2"/></svg>
<svg style="left:1073.50px;top:119.00px;" width="7.00" height="5.00" viewBox="0 0 7 5"><path d="M0.5 0.8 L3.5 4 L6.5 0.8" stroke="#aab3bf" stroke-width="1" fill="none"/></svg>
<svg style="left:1113.00px;top:112.00px;" width="16.00" height="18.00" viewBox="0 0 16 18"><circle cx="8" cy="6.3" r="3.2" stroke="#ffffff" stroke-width="1.5" fill="none"/><path d="M2.2 17 a5.8 5.8 0 0 1 11.6 0" stroke="#ffffff" stroke-width="1.5" fill="none"/></svg>
<svg style="left:1237.20px;top:118.00px;" width="5.20" height="3.40" viewBox="0 0 7 4.5"><path d="M0.3 0.3 H6.7 L3.500 4.2 Z" fill="#9aa1a9"/></svg>
<svg style="left:1257.50px;top:116.50px;" width="9.00" height="9.00" viewBox="0 0 9 9"><path d="M4.5 0 V9 M0 4.5 H9" stroke="#ffffff" stroke-width="1.3" fill="none"/></svg>
<svg style="left:122.80px;top:172.60px;" width="13.00" height="13.00" viewBox="0 0 13 13"><path d="M2.2 9.3 L2.8 6.600 L8.6 0.800 L10.7 2.900 L4.900 8.700 Z" stroke="#3067a8" stroke-width="1.1" fill="none" stroke-linejoin="round"/><path d="M0.500 11.5 H12.5" stroke="#3067a8" stroke-width="1.1"/></svg>
<svg style="left:812.60px;top:172.50px;" width="24.00" height="24.00" viewBox="0 0 24 24"><g transform="rotate(-45 12 12)" fill="none" stroke="#222222" stroke-width="2"><path d="M12.800 9.600 H4.800 a3.600 3.600 0 0 0 0 7.200 H8.500"/><path d="M11.200 14.400 H19.200 a3.600 3.600 0 0 0 0 -7.200 H15.500"/></g></svg>
<svg style="left:849.00px;top:172.00px;" width="21.00" height="24.00" viewBox="0 0 21 24"><path d="M1.8 10.500 L11.8 2.300 L18.3 1.900 L18.900 10.300 L8.900 19 Z" stroke="#222222" stroke-width="1.7" fill="none" stroke-linejoin="round"/><circle cx="14.800" cy="6" r="1" fill="#222222"/><path d="M3.200 15.800 L9.100 22 L18.700 13.500" stroke="#222222" stroke-width="1.7" fill="none"/></svg>
<svg style="left:926.50px;top:182.50px;" width="6.50" height="4.50" viewBox="0 0 6.500 4.500"><path d="M0 0 H6.500 L3.250 4.500 Z" fill="#2e6bb0"/></svg>
<svg style="left:95.80px;top:228.00px;" width="6.50" height="4.50" viewBox="0 0 7 5"><path d="M0.500 0.800 L3.500 4 L6.500 0.800" stroke="#b4b8bd" stroke-width="1" fill="none"/></svg>
<svg style="left:112.70px;top:314.30px;" width="9.00" height="9.00" viewBox="0 0 13 13"><path d="M2.2 9.3 L2.8 6.600 L8.6 0.800 L10.7 2.900 L4.900 8.700 Z" stroke="#c9ccd0" stroke-width="1" fill="none" stroke-linejoin="round"/><path d="M0.500 11.5 H12.5" stroke="#c9ccd0" stroke-width="1"/></svg>
<svg style="left:214.70px;top:315.40px;" width="9.00" height="6.50" viewBox="0 0 9 6.5"><path d="M0.500 5.800 L4.500 1 L8.500 5.800" stroke="#3a5f85" stroke-width="1.2" fill="none"/></svg>
<span class="t" style="left:42.50px;top:353.00px;font-size:7.00px;color:#ffffff;font-weight:700;">i</span>
<svg style="left:135.20px;top:516.60px;" width="9.00" height="9.00" viewBox="0 0 13 13"><path d="M2.2 9.3 L2.8 6.600 L8.6 0.800 L10.7 2.900 L4.900 8.700 Z" stroke="#c9ccd0" stroke-width="1" fill="none" stroke-linejoin="round"/><path d="M0.500 11.5 H12.5" stroke="#c9ccd0" stroke-width="1"/></svg>
<svg style="left:214.70px;top:517.80px;" width="9.00" height="6.50" viewBox="0 0 9 6.5"><path d="M0.500 5.800 L4.500 1 L8.500 5.800" stroke="#3a5f85" stroke-width="1.2" fill="none"/></svg>
<svg style="left:118.30px;top:617.00px;" width="9.00" height="9.00" viewBox="0 0 13 13"><path d="M2.2 9.3 L2.8 6.600 L8.6 0.800 L10.7 2.900 L4.900 8.700 Z" stroke="#c9ccd0" stroke-width="1" fill="none" stroke-linejoin="round"/><path d="M0.500 11.5 H12.5" stroke="#c9ccd0" stroke-width="1"/></svg>
<svg style="left:214.50px;top:618.20px;" width="9.00" height="6.50" viewBox="0 0 9 6.5"><path d="M0.500 5.800 L4.500 1 L8.500 5.800" stroke="#3a5f85" stroke-width="1.2" fill="none"/></svg>
<svg style="left:45.00px;top:695.00px;" width="8.00" height="9.50" viewBox="0 0 8 9.500"><path d="M1.500 0.700 H7.300 V8.800 H3.200 L1.500 7 Z" stroke="#8fb2d6" stroke-width="1.2" fill="#e8f1fa"/></svg>
<svg style="left:69.00px;top:696.00px;" width="8.50" height="8.50" viewBox="0 0 13 13"><path d="M2.2 9.3 L2.8 6.600 L8.6 0.800 L10.7 2.900 L4.900 8.700 Z" stroke="#6b7280" stroke-width="1" fill="none" stroke-linejoin="round"/><path d="M0.500 11.5 H12.5" stroke="#6b7280" stroke-width="1"/></svg>
<svg style="left:262.00px;top:308.40px;" width="8.50" height="10.50" viewBox="0 0 8.500 10.500"><path d="M0.600 0.600 H5.600 L7.900 2.900 V9.900 H0.600 Z" stroke="#5c8fc0" stroke-width="1" fill="none" stroke-linejoin="round"/><path d="M5.400 0.600 V3.100 H7.900" stroke="#5c8fc0" stroke-width="0.800" fill="none"/><path d="M2.200 5.500 H5 M2.200 5.500 V7.300" stroke="#5c8fc0" stroke-width="0.900" fill="none"/></svg>
<svg style="left:327.00px;top:309.00px;" width="10.50" height="9.50" viewBox="0 0 10.500 9.500"><rect x="0.600" y="0.600" width="9.300" height="8.300" rx="0.800" stroke="#2b2f36" stroke-width="1" fill="none"/><path d="M3 3 H5 M3 4.750 H5 M3 6.500 H5 M6 3 H7.800 M6 4.750 H7.800 M6 6.500 H7.800" stroke="#2b2f36" stroke-width="0.800"/></svg>
<svg style="left:391.00px;top:309.50px;" width="11.50" height="8.50" viewBox="0 0 11.500 8.500"><rect x="0.600" y="0.600" width="10.300" height="7.300" stroke="#2b2f36" stroke-width="1.100" fill="none"/><path d="M0.800 0.800 L5.750 4.800 L10.700 0.800" stroke="#2b2f36" stroke-width="1.100" fill="none"/></svg>
<svg style="left:461.00px;top:309.00px;" width="9.50" height="9.50" viewBox="0 0 9.500 9.500"><path d="M0.800 8.700 L5.500 4" stroke="#2b2f36" stroke-width="1.300"/><path d="M6.300 0.300 V1.800 M8.200 1.300 L7.300 2.200 M9.200 3.200 H7.700 M8.200 5.600 L7.500 4.900 M4.100 1.300 L4.900 2.100" stroke="#2b2f36" stroke-width="0.800"/></svg>
<svg style="left:536.40px;top:308.40px;" width="8.50" height="10.50" viewBox="0 0 8.500 10.500"><path d="M0.600 0.600 H5.600 L7.900 2.900 V9.900 H0.600 Z" stroke="#2b2f36" stroke-width="1" fill="none" stroke-linejoin="round"/><path d="M5.400 0.600 V3.100 H7.900" stroke="#2b2f36" stroke-width="0.800" fill="none"/><path d="M2.500 8 C3.500 6.500 4.200 5 4.200 4 C4.200 5.500 5 7 6.200 7.200 C5 7.200 3.500 7.500 2.500 8" stroke="#2b2f36" stroke-width="0.700" fill="none"/></svg>
<svg style="left:613.40px;top:309.20px;" width="10.50" height="9.00" viewBox="0 0 10.500 9"><rect x="0.600" y="1.200" width="9.300" height="7.200" rx="0.600" stroke="#6b9bd2" stroke-width="1" fill="none"/><path d="M2.800 0 V2 M7.700 0 V2" stroke="#6b9bd2" stroke-width="0.900"/><path d="M2.300 4.200 H4 M2.300 6 H4 M5.500 5.200 L6.500 6.200 L8.300 4" stroke="#6b9bd2" stroke-width="0.800" fill="none"/></svg>
<svg style="left:724.50px;top:308.40px;" width="8.50" height="10.50" viewBox="0 0 8.500 10.500"><path d="M0.600 0.600 H5.600 L7.900 2.900 V9.900 H0.600 Z" stroke="#2b2f36" stroke-width="1" fill="none" stroke-linejoin="round"/><path d="M5.400 0.600 V3.100 H7.900" stroke="#2b2f36" stroke-width="0.800" fill="none"/><path d="M3 8 V4.800 H4.600 a1 1 0 0 1 0 2 H3" stroke="#2b2f36" stroke-width="0.800" fill="none"/></svg>
<svg style="left:630.20px;top:327.30px;" width="15.50" height="16.50" viewBox="0 0 15 16"><g transform="rotate(-14 7.500 8)"><path d="M4.200 8.500 V2 a1.100 1.100 0 0 1 2.200 0 V6 a1 1 0 0 1 2.100 0.200 a1 1 0 0 1 2.100 0.300 a1 1 0 0 1 2 0.500 V11 c0 2.500 -1.200 4.300 -3.700 4.300 H7.500 c-1.800 0 -2.700 -0.800 -3.600 -2.100 L1.200 9.600 c-0.600 -1 0.700 -1.900 1.500 -1.100 Z" fill="#ffffff" stroke="#1a1a1a" stroke-width="1.300" stroke-linejoin="round"/><path d="M7 10.500 V13 M8.800 10.500 V13 M10.600 10.500 V13" stroke="#222222" stroke-width="0.700"/></g></svg>
<svg style="left:879.00px;top:371.00px;" width="8.00" height="5.50" viewBox="0 0 8 5.500"><path d="M0.600 0.800 L4 4.600 L7.400 0.800" stroke="#c4c7cb" stroke-width="1" fill="none"/></svg>
<svg style="left:901.50px;top:369.50px;" width="8.00" height="8.00" viewBox="0 0 8 8"><path d="M4 0 V8 M0 4 H8" stroke="#ffffff" stroke-width="1.200"/></svg>
<svg style="left:920.50px;top:369.50px;" width="8.00" height="8.00" viewBox="0 0 13 13"><path d="M2.2 9.3 L2.8 6.600 L8.6 0.800 L10.7 2.900 L4.900 8.700 Z" stroke="#c4c7cb" stroke-width="1" fill="none" stroke-linejoin="round"/><path d="M0.500 11.5 H12.5" stroke="#c4c7cb" stroke-width="1"/></svg>
<svg style="left:352.60px;top:412.30px;" width="6.00" height="4.00" viewBox="0 0 6 4"><path d="M0.500 0.500 L3 3 L5.5 0.500" stroke="#222222" stroke-width="1.2" fill="none"/></svg>
<div class="r" style="left:366.50px;top:401.00px;width:1.00px;height:23.00px;background:#e9eaec;"></div>
<span class="t" style="left:375.50px;top:408.00px;font-size:12.50px;color:#222222;font-weight:700;">B</span>
<span class="t" style="left:402.30px;top:408.00px;font-size:12.50px;color:#222222;font-style:italic;font-family:'Liberation Serif',serif;">I</span>
<span class="t" style="left:426.50px;top:408.00px;font-size:10.50px;color:#222222;">U</span>
<div class="r" style="left:426.50px;top:419.00px;width:8.50px;height:1.00px;background:#222222;"></div>
<div class="r" style="left:452.00px;top:413.20px;width:1.60px;height:1.60px;background:#222222;border-radius:50%;"></div>
<div class="r" style="left:455.50px;top:413.20px;width:1.60px;height:1.60px;background:#222222;border-radius:50%;"></div>
<div class="r" style="left:459.00px;top:413.20px;width:1.60px;height:1.60px;background:#222222;border-radius:50%;"></div>
<div class="r" style="left:470.50px;top:401.00px;width:1.00px;height:23.00px;background:#e9eaec;"></div>
<span class="t" style="left:476.00px;top:408.00px;font-size:12.00px;color:#222222;">A</span>
<div class="r" style="left:484.50px;top:408.50px;width:3.50px;height:0.80px;background:#222222;"></div>
<div class="r" style="left:484.50px;top:410.30px;width:3.50px;height:0.80px;background:#222222;"></div>
<div class="r" style="left:484.50px;top:412.10px;width:3.50px;height:0.80px;background:#222222;"></div>
<svg style="left:491.00px;top:412.30px;" width="6.00" height="4.00" viewBox="0 0 6 4"><path d="M0.500 0.500 L3 3 L5.5 0.500" stroke="#222222" stroke-width="1.2" fill="none"/></svg>
<span class="t" style="left:506.00px;top:408.00px;font-size:10.50px;color:#222222;">A</span>
<div class="r" style="left:505.50px;top:418.60px;width:8.50px;height:1.30px;background:#222222;"></div>
<svg style="left:519.30px;top:412.30px;" width="6.00" height="4.00" viewBox="0 0 6 4"><path d="M0.500 0.500 L3 3 L5.5 0.500" stroke="#222222" stroke-width="1.2" fill="none"/></svg>
<div class="r" style="left:529.50px;top:401.00px;width:1.00px;height:23.00px;background:#e9eaec;"></div>
<svg style="left:537.50px;top:409.00px;" width="11.50" height="9.50" viewBox="0 0 11.500 9.500"><circle cx="1.200" cy="2" r="1.100" fill="#222"/><circle cx="1.200" cy="7.500" r="1.100" fill="#222"/><path d="M4 2 H11.200 M4 7.500 H11.200" stroke="#222" stroke-width="1.300"/></svg>
<svg style="left:562.50px;top:408.50px;" width="12.50" height="10.50" viewBox="0 0 12.500 10.500"><path d="M1.200 0.500 V3.500 M0.300 1.300 L1.200 0.500" stroke="#222" stroke-width="0.900" fill="none"/><path d="M0.300 6.800 Q1.200 6 2 6.800 Q2.200 7.800 0.300 9.500 H2.200" stroke="#222" stroke-width="0.800" fill="none"/><path d="M4.800 2.200 H12.200 M4.800 8 H12.200" stroke="#222" stroke-width="1.300"/></svg>
<svg style="left:589.00px;top:409.00px;" width="11.50" height="9.50" viewBox="0 0 11.500 9.500"><path d="M0 0.700 H11.500 M4.500 3.400 H11.500 M4.500 6.100 H11.500 M0 8.800 H11.500" stroke="#b9bcc0" stroke-width="1.100"/><path d="M0.300 3 L2.800 4.750 L0.300 6.500 Z" fill="#b9bcc0"/></svg>
<svg style="left:614.30px;top:409.00px;" width="11.50" height="9.50" viewBox="0 0 11.500 9.500"><path d="M0 0.700 H11.500 M4.500 3.400 H11.500 M4.500 6.100 H11.500 M0 8.800 H11.500" stroke="#b9bcc0" stroke-width="1.100"/><path d="M2.800 3 L0.300 4.750 L2.800 6.500 Z" fill="#b9bcc0"/></svg>
<div class="r" style="left:634.50px;top:401.00px;width:1.00px;height:23.00px;background:#e9eaec;"></div>
<svg style="left:642.70px;top:407.70px;" width="12.00" height="12.00" viewBox="0 0 24 24"><g transform="rotate(-45 12 12)" fill="none" stroke="#222222" stroke-width="2.200"><path d="M12.800 9.600 H4.800 a3.600 3.600 0 0 0 0 7.200 H8.500"/><path d="M11.200 14.400 H19.200 a3.600 3.600 0 0 0 0 -7.200 H15.500"/></g></svg>
<span class="t" style="left:667.20px;top:406.00px;font-size:26.00px;color:#222222;font-weight:700;">“</span>
<span class="t" style="left:690.50px;top:408.00px;font-size:13.50px;color:#222222;">Ω</span>
<svg style="left:705.80px;top:412.30px;" width="6.00" height="4.00" viewBox="0 0 6 4"><path d="M0.500 0.500 L3 3 L5.5 0.500" stroke="#222222" stroke-width="1.2" fill="none"/></svg>
<svg style="left:721.90px;top:408.70px;" width="11.50" height="9.80" viewBox="0 0 11.500 9.800"><rect x="0.600" y="0.600" width="10.300" height="8.600" rx="0.500" stroke="#222" stroke-width="1.200" fill="none"/><path d="M1.200 8.600 L4.200 5 L6.200 7 L8 5.600 L10.300 8.600 Z" fill="#222"/><circle cx="7.800" cy="3.200" r="0.900" fill="#222"/></svg>
<svg style="left:744.90px;top:408.50px;" width="11.50" height="10.50" viewBox="0 0 11.500 10.500"><rect x="0.600" y="0.600" width="10.300" height="9.300" rx="0.500" stroke="#222" stroke-width="1.200" fill="none"/><path d="M0.600 2.800 H10.900" stroke="#222" stroke-width="1.800"/><path d="M0.600 5.300 H10.900 M0.600 7.600 H10.900 M4 2.800 V9.900 M7.500 2.800 V9.900" stroke="#222" stroke-width="0.800"/></svg>
<svg style="left:760.50px;top:412.30px;" width="6.00" height="4.00" viewBox="0 0 6 4"><path d="M0.500 0.500 L3 3 L5.5 0.500" stroke="#222222" stroke-width="1.2" fill="none"/></svg>
<svg style="left:262.00px;top:677.00px;" width="14.00" height="14.00" viewBox="0 0 14 14"><rect x="1.200" y="2.200" width="11.600" height="10.600" rx="1" stroke="#fff" stroke-width="1.200" fill="none"/><path d="M1.200 5.500 H12.800 M4.200 0.800 V3.300 M9.800 0.800 V3.300" stroke="#fff" stroke-width="1.200"/></svg>
<svg style="left:290.00px;top:677.00px;" width="9.00" height="14.00" viewBox="0 0 9 14"><path d="M9 0 L0 7 L9 14 Z" fill="#ffffff"/></svg>
<svg style="left:918.50px;top:665.55px;" width="7.00" height="4.50" viewBox="0 0 7 4.5"><path d="M0.500 0.500 L3.5 3.5 L6.5 0.500" stroke="#2b2f36" stroke-width="1.1" fill="none"/></svg>
<svg style="left:323.50px;top:698.50px;" width="9.00" height="10.00" viewBox="0 0 9 10"><circle cx="4.500" cy="3" r="2.200" stroke="#2a9d5c" stroke-width="1" fill="none"/><path d="M0.800 9.600 a3.700 3.700 0 0 1 7.400 0" stroke="#2a9d5c" stroke-width="1" fill="none"/></svg>
<svg style="left:1141.50px;top:213.00px;" width="10.50" height="10.50" viewBox="0 0 10.500 10.500"><circle cx="5.250" cy="5.250" r="4.600" stroke="#2b2f36" stroke-width="0.900" fill="none"/></svg>
<span class="t" style="left:1144.50px;top:215.00px;font-size:8.50px;color:#2b2f36;">?</span>
<svg style="left:976.20px;top:255.60px;" width="8.80" height="8.80" viewBox="0 0 9.500 9.500"><circle cx="3.800" cy="3.800" r="2.900" stroke="#2b2f36" stroke-width="1.200" fill="none"/><path d="M6 6 L9 9" stroke="#2b2f36" stroke-width="1.300"/></svg>
<svg style="left:1257.00px;top:255.50px;" width="8.50" height="8.00" viewBox="0 0 8.500 8"><path d="M0.600 0.600 H7.900 L5.300 4 V7.300 H3.200 V4 Z" stroke="#2b2f36" stroke-width="1" fill="none" stroke-linejoin="round"/></svg>
<svg style="left:1259.20px;top:344.40px;" width="10.50" height="10.50" viewBox="0 0 9 9"><g transform="rotate(45 4.500 4.500)"><path d="M2.200 0.200 H6.800 V1.500 H6.100 V3.600 L7.500 5.400 V6 H1.500 V5.400 L2.900 3.600 V1.500 H2.200 Z" fill="#cdd0d4"/><path d="M4.500 6 V9.600" stroke="#cdd0d4" stroke-width="1.100"/></g></svg>
<svg style="left:1259.20px;top:420.40px;" width="10.50" height="10.50" viewBox="0 0 9 9"><g transform="rotate(45 4.500 4.500)"><path d="M2.200 0.200 H6.800 V1.500 H6.100 V3.600 L7.500 5.400 V6 H1.500 V5.400 L2.900 3.600 V1.500 H2.200 Z" fill="#cdd0d4"/><path d="M4.500 6 V9.600" stroke="#cdd0d4" stroke-width="1.100"/></g></svg>
<svg style="left:1259.20px;top:501.40px;" width="10.50" height="10.50" viewBox="0 0 9 9"><g transform="rotate(45 4.500 4.500)"><path d="M2.200 0.200 H6.800 V1.500 H6.100 V3.600 L7.500 5.400 V6 H1.500 V5.400 L2.900 3.600 V1.500 H2.200 Z" fill="#cdd0d4"/><path d="M4.500 6 V9.600" stroke="#cdd0d4" stroke-width="1.100"/></g></svg>
<svg style="left:1259.20px;top:582.40px;" width="10.50" height="10.50" viewBox="0 0 9 9"><g transform="rotate(45 4.500 4.500)"><path d="M2.200 0.200 H6.800 V1.500 H6.100 V3.600 L7.500 5.400 V6 H1.500 V5.400 L2.900 3.600 V1.500 H2.200 Z" fill="#cdd0d4"/><path d="M4.500 6 V9.600" stroke="#cdd0d4" stroke-width="1.100"/></g></svg>
<svg style="left:1259.20px;top:663.40px;" width="10.50" height="10.50" viewBox="0 0 9 9"><g transform="rotate(45 4.500 4.500)"><path d="M2.200 0.200 H6.800 V1.500 H6.100 V3.600 L7.500 5.400 V6 H1.500 V5.400 L2.900 3.600 V1.500 H2.200 Z" fill="#cdd0d4"/><path d="M4.500 6 V9.600" stroke="#cdd0d4" stroke-width="1.100"/></g></svg>
<svg style="left:1098.20px;top:302.40px;" width="10.50" height="10.50" viewBox="0 0 9 9"><g transform="rotate(45 4.500 4.500)"><path d="M2.200 0.200 H6.800 V1.500 H6.100 V3.600 L7.500 5.400 V6 H1.500 V5.400 L2.900 3.600 V1.500 H2.200 Z" fill="#f0a62a"/><path d="M4.500 6 V9.600" stroke="#f0a62a" stroke-width="1.100"/></g></svg>
<svg style="left:1255.10px;top:292.90px;" width="4.80" height="4.80" viewBox="0 0 4.8 4.8"><path d="M0 0 L4.8 4.8 M4.8 0 L0 4.8" stroke="#2b2f36" stroke-width="1" fill="none"/></svg>
<svg style="left:970.50px;top:348.50px;" width="7.50" height="9.00" viewBox="0 0 7.500 9"><path d="M1.500 0.500 V8.500" stroke="#5bb58a" stroke-width="1.100"/><path d="M1.500 5.500 C5.500 5.500 6 4 6 1.200" stroke="#5bb58a" stroke-width="1.100" fill="none"/><circle cx="1.500" cy="1" r="0.900" fill="#5bb58a"/><circle cx="6" cy="1" r="0.900" fill="#5bb58a"/></svg>
<svg style="left:970.50px;top:424.30px;" width="7.50" height="9.20" viewBox="0 0 7.500 9.200"><path d="M0.600 0.600 H4.800 L6.900 2.700 V8.600 H0.600 Z" stroke="#4db07e" stroke-width="1" fill="none" stroke-linejoin="round"/><path d="M2 5 H4.300 M2 5 V6.600" stroke="#4db07e" stroke-width="0.800" fill="none"/></svg>
<svg style="left:970.50px;top:505.30px;" width="7.50" height="9.20" viewBox="0 0 7.500 9.200"><path d="M0.600 0.600 H4.800 L6.900 2.700 V8.600 H0.600 Z" stroke="#4db07e" stroke-width="1" fill="none" stroke-linejoin="round"/><path d="M2 5 H4.300 M2 5 V6.600" stroke="#4db07e" stroke-width="0.800" fill="none"/></svg>
<svg style="left:970.50px;top:586.30px;" width="7.50" height="9.20" viewBox="0 0 7.500 9.200"><path d="M0.600 0.600 H4.800 L6.900 2.700 V8.600 H0.600 Z" stroke="#4db07e" stroke-width="1" fill="none" stroke-linejoin="round"/><path d="M2 5 H4.300 M2 5 V6.600" stroke="#4db07e" stroke-width="0.800" fill="none"/></svg>
<svg style="left:970.50px;top:667.20px;" width="7.50" height="9.20" viewBox="0 0 7.500 9.200"><path d="M0.800 7 C1.800 6 1.500 4.500 1.600 3.300 a2.150 2.150 0 0 1 4.300 0 C6 4.500 5.700 6 6.700 7 Z" stroke="#4db07e" stroke-width="0.900" fill="none" stroke-linejoin="round"/><path d="M3 8.300 H4.500" stroke="#4db07e" stroke-width="0.900"/></svg>
<svg style="left:1228.40px;top:674.70px;" width="23.60" height="25.50" viewBox="0 0 23.600 25.500"><path d="M3 0 H20.600 a3 3 0 0 1 3 3 V25.500 L17 22.500 H3 a3 3 0 0 1 -3 -3 V3 a3 3 0 0 1 3 -3 Z" fill="#ffffff"/><path d="M4.500 15.500 Q11.800 21 19.100 15.500" stroke="#2a9d5c" stroke-width="1.400" fill="none" stroke-linecap="round"/></svg>
<div class="r" style="left:0.00px;top:0.00px;width:1280.00px;height:1.00px;background:#6a6b6e;"></div>
<div class="r" style="left:0.00px;top:1.00px;width:1.00px;height:97.00px;background:#3d3e41;"></div>
<svg style="left:0.00px;top:0.00px;" width="7.00" height="7.00" viewBox="0 0 7 7"><path d="M0 0 H7 A7 7 0 0 0 0 7 Z" fill="#a3174f"/></svg>
<svg style="left:0.00px;top:718.00px;" width="10.00" height="10.00" viewBox="0 0 10 10"><path d="M0 0 A10 10 0 0 0 10 10 H0 Z" fill="#0a0a0a"/></svg>
<svg style="left:1270.00px;top:718.00px;" width="10.00" height="10.00" viewBox="0 0 10 10"><path d="M10 0 A10 10 0 0 1 0 10 H10 Z" fill="#0a0a0a"/></svg>
<div class="r" style="left:1277.50px;top:1.00px;width:2.50px;height:97.00px;background:#1b1c1e;"></div>
<svg style="left:1272.00px;top:0.00px;" width="8.00" height="8.00" viewBox="0 0 8 8"><path d="M8 0 H0 A8 8 0 0 1 8 8 Z" fill="#1b1c1e"/></svg>
</body></html>
